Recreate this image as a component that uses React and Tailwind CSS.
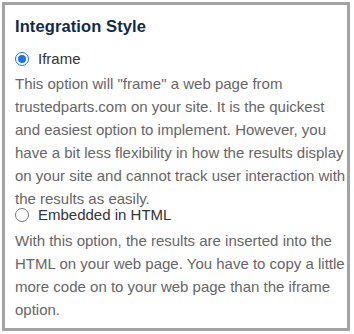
export default function App() {
  return (
    <div className="w-[354px] h-[334px] bg-white p-[2px] font-['Liberation_Sans',Arial,sans-serif]">
      <div className="h-[329px] w-[348px] border-[3px] border-[#a3a3a3] bg-white pl-[10px] pt-[10px]">
        <h2 className="text-[16.5px] leading-[22px] font-bold text-[#0f2b4c] tracking-[0.1px]">Integration Style</h2>
        <label className="mt-[12px] flex items-center gap-[9px] text-[15px] leading-[20px] text-[#333]">
          <span className="flex h-[14px] w-[14px] items-center justify-center rounded-full border-[1.5px] border-[#1a73e8] bg-white">
            <span className="h-[8px] w-[8px] rounded-full bg-[#1a73e8]" />
          </span>
          Iframe
        </label>
        <p className="mt-[3px] text-[15px] leading-[23px] text-[#666]">
          This option will "frame" a web page from trustedparts.com on your site. It is the quickest and easiest option to implement. However, you have a bit less flexibility in how the results display on your site and cannot track user interaction with the results as easily.
        </p>
        <label className="mt-[-5px] flex items-center gap-[9px] text-[15px] leading-[20px] text-[#333]">
          <span className="h-[14px] w-[14px] rounded-full border border-[#767676] bg-white" />
          Embedded in HTML
        </label>
        <p className="mt-[4px] text-[15px] leading-[23px] text-[#666]">
          With this option, the results are inserted into the HTML on your web page. You have to copy a little more code on to your web page than the iframe option.
        </p>
      </div>
    </div>
  )
}
